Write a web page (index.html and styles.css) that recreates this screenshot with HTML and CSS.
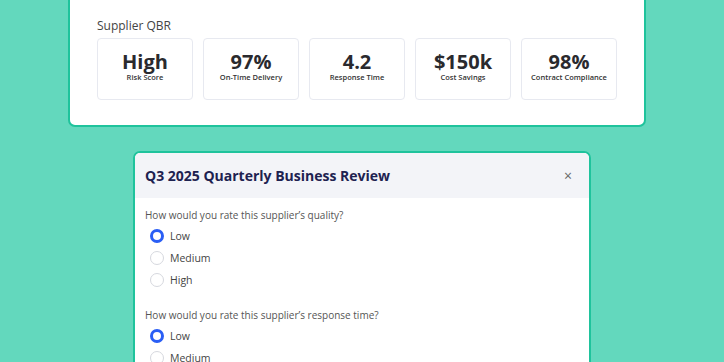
FILE: index.html
```html
<!DOCTYPE html>
<html lang="en">
<head>
  <meta charset="UTF-8">
  <meta name="viewport" content="width=device-width, initial-scale=1.0">
  <title>Supplier QBR</title>
  <link rel="stylesheet" href="styles.css">
</head>
<body>
  <!-- Dashboard card (top is scrolled out of view) -->
  <section class="panel">
    <h2 class="panel-title">Supplier QBR</h2>
    <div class="stats">
      <div class="stat"><span class="stat-value">High</span><span class="stat-label">Risk Score</span></div>
      <div class="stat"><span class="stat-value">97%</span><span class="stat-label">On-Time Delivery</span></div>
      <div class="stat"><span class="stat-value">4.2</span><span class="stat-label">Response Time</span></div>
      <div class="stat"><span class="stat-value">$150k</span><span class="stat-label">Cost Savings</span></div>
      <div class="stat"><span class="stat-value">98%</span><span class="stat-label">Contract Compliance</span></div>
    </div>
  </section>

  <!-- Review modal -->
  <section class="modal">
    <header class="modal-header">
      <h1 class="modal-title">Q3 2025 Quarterly Business Review</h1>
      <span class="modal-close">&times;</span>
    </header>
    <div class="modal-body">
      <div class="question">
        <p class="question-text">How would you rate this supplier’s quality?</p>
        <label class="option"><span class="radio checked"></span>Low</label>
        <label class="option"><span class="radio"></span>Medium</label>
        <label class="option"><span class="radio"></span>High</label>
      </div>
      <div class="question">
        <p class="question-text">How would you rate this supplier’s response time?</p>
        <label class="option"><span class="radio checked"></span>Low</label>
        <label class="option"><span class="radio"></span>Medium</label>
        <label class="option"><span class="radio"></span>High</label>
      </div>
    </div>
  </section>
</body>
</html>
```

FILE: styles.css
```css
body {
  margin: 0;
  background: #63d8bd;
  font-family: 'Open Sans', 'Liberation Sans', sans-serif;
  overflow: hidden;
  height: 362px;
}

.panel {
  box-sizing: border-box;
  width: 578px;
  margin: -10px 0 0 68px;
  padding: 27px 27px 25px;
  background: #fff;
  border: 2px solid #1fc39c;
  border-radius: 7px;
}

.panel-title {
  margin: 0 0 5px;
  font-size: 12px;
  line-height: 14px;
  font-weight: 400;
  color: #444;
}

.stats {
  display: grid;
  grid-template-columns: repeat(5, 96px);
  gap: 10px;
}

.stat {
  height: 62px;
  box-sizing: border-box;
  border: 1px solid #e7e9f0;
  border-radius: 4px;
  display: flex;
  flex-direction: column;
  align-items: center;
  padding-top: 13px;
}

.stat-value {
  font-size: 20px;
  line-height: 20px;
  font-weight: 700;
  color: #2a2a2e;
}

.stat-label {
  font-size: 7.5px;
  line-height: 9px;
  margin-top: 1px;
  font-weight: 600;
  color: #333;
}

.modal {
  box-sizing: border-box;
  width: 458px;
  margin: 24px 0 0 133px;
  background: #fff;
  border: 2px solid #1fc39c;
  border-radius: 7px;
  overflow: hidden;
}

.modal-header {
  height: 45px;
  background: #f3f4f8;
  display: flex;
  align-items: center;
  justify-content: space-between;
  padding: 0 17px 0 10px;
}

.modal-title {
  margin: 0;
  font-size: 14px;
  font-weight: 700;
  color: #1e2250;
}

.modal-close {
  font-size: 14px;
  color: #666;
}

.modal-body {
  padding: 6px 10px 0;
}

.question {
  margin-bottom: 13px;
}

.question-text {
  margin: 0;
  height: 21px;
  line-height: 22px;
  font-size: 10px;
  color: #555;
}

.option {
  display: flex;
  align-items: center;
  height: 22px;
  padding-left: 5px;
  gap: 6px;
  font-size: 10.5px;
  color: #444;
}

.radio {
  box-sizing: border-box;
  width: 14px;
  height: 14px;
  border-radius: 50%;
  border: 1px solid #d6d8de;
  background: #fff;
}

.radio.checked {
  border: 3.5px solid #2a5ef5;
}
```
